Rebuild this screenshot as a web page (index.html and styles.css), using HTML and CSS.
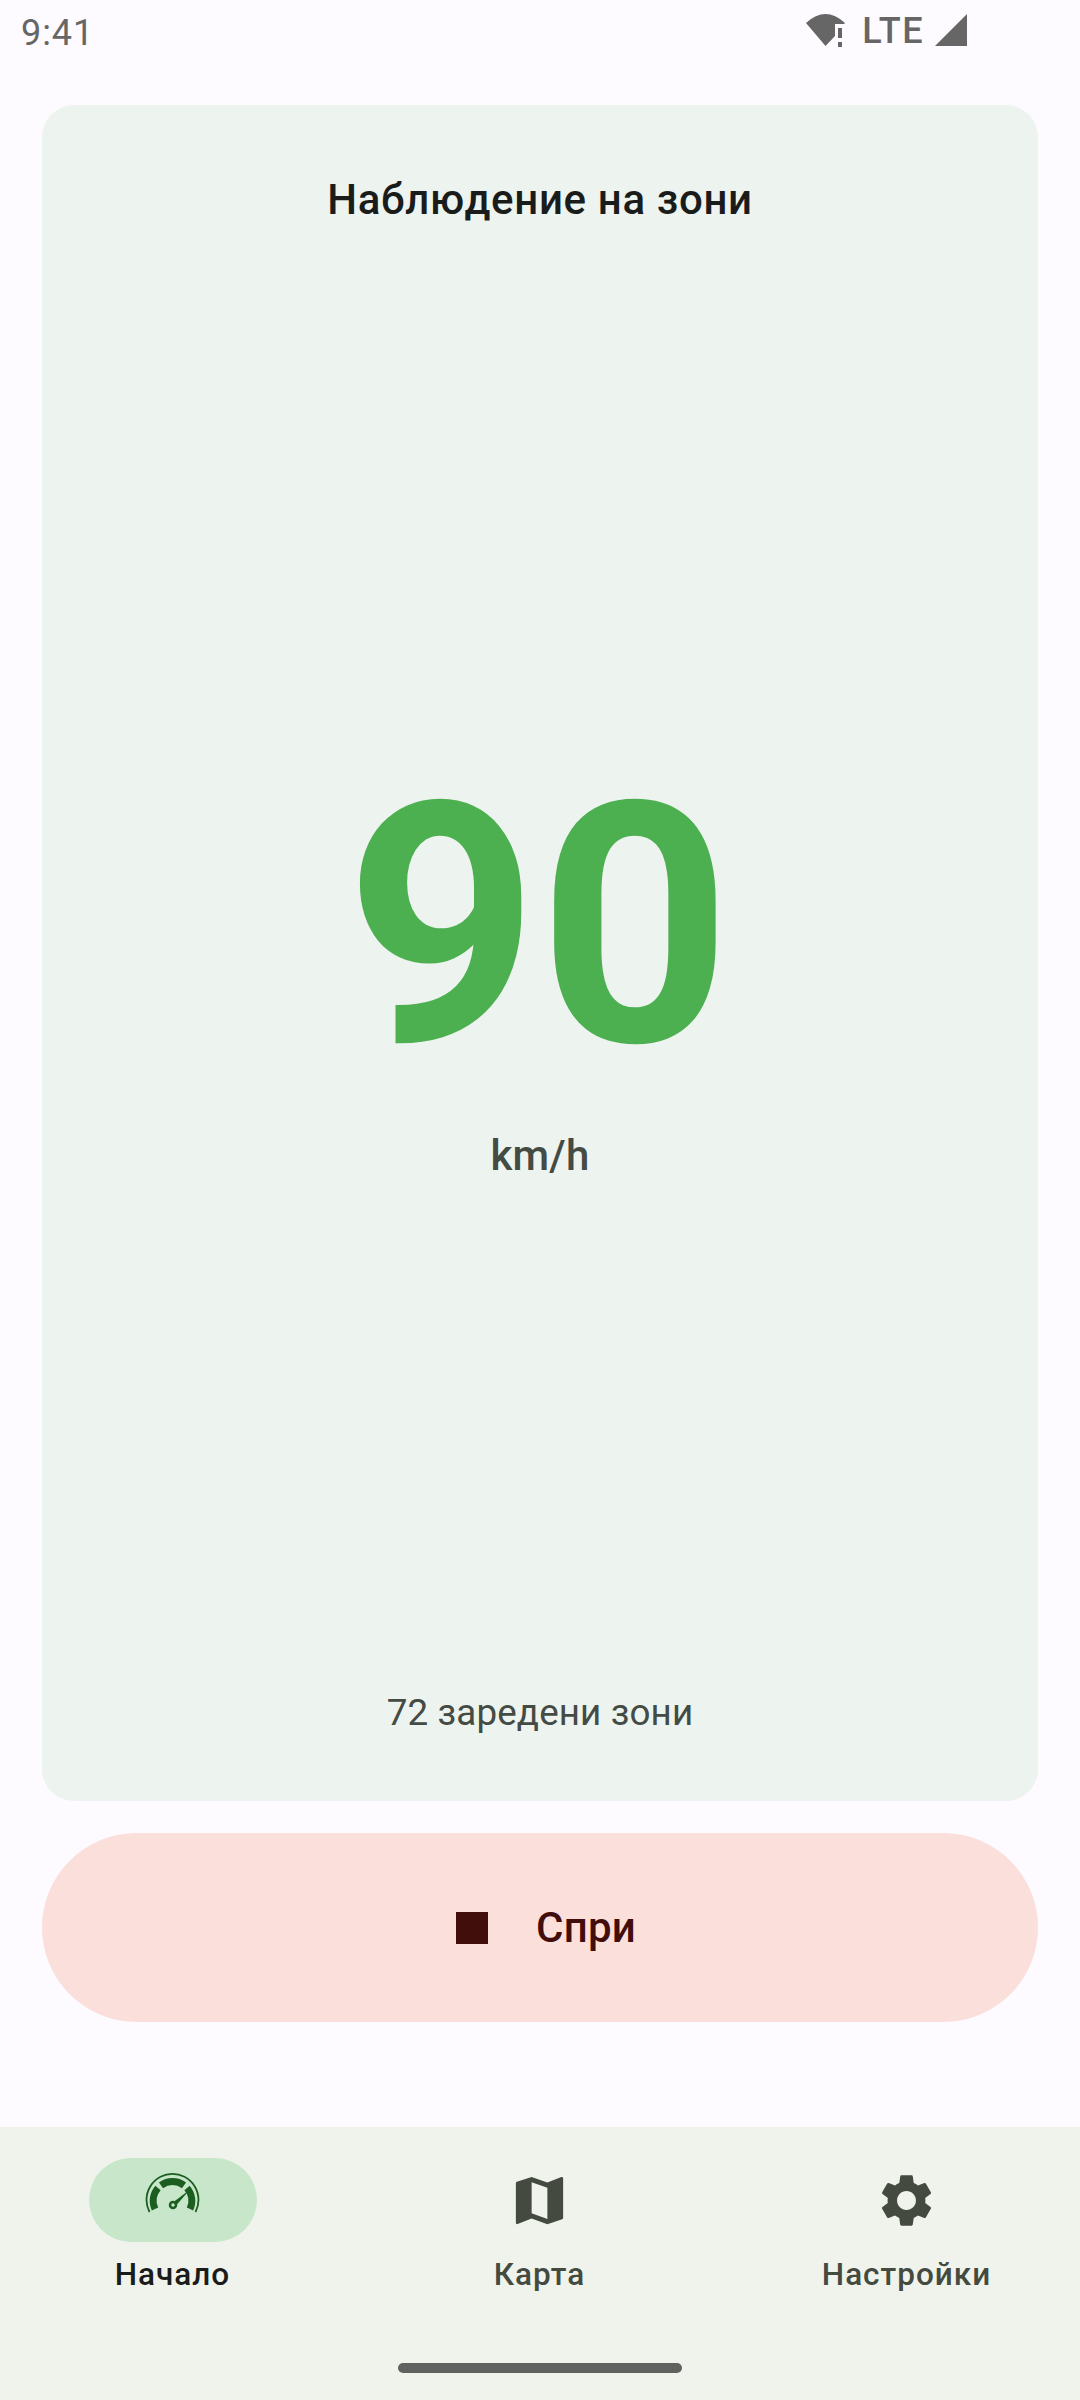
FILE: index.html
```html
<!DOCTYPE html>
<html lang="en">
<head>
    <meta charset="UTF-8">
    <title>Наблюдение на зони</title>
    <link rel="stylesheet" href="styles.css">
</head>
<body>
    <div class="status-bar">
        <span class="clock">9:41</span>
        <div class="status-icons">
            <svg class="wifi" width="40" height="34" viewBox="0 0 40 34">
                <path d="M0 10 Q19.5 -8 39 10 L38 11 L29 11 L29 23 L19.5 33 Z" />
                <rect x="32" y="15" width="4" height="10" />
                <rect x="32" y="29" width="4" height="5" />
            </svg>
            <span class="lte">LTE</span>
            <svg class="signal" width="32" height="32" viewBox="0 0 32 32">
                <path d="M32 0 V32 H0 Z" />
            </svg>
        </div>
    </div>

    <main class="content">
        <section class="card">
            <h2 class="card-title">Наблюдение на зони</h2>
            <div class="speed">
                <div class="speed-value">90</div>
                <div class="speed-unit">km/h</div>
            </div>
            <p class="zones">72 заредени зони</p>
        </section>
        <button class="stop-btn">
            <span class="stop-icon"></span>
            <span>Спри</span>
        </button>
    </main>

    <nav class="nav">
        <a class="nav-item active">
            <span class="nav-icon">
                <svg width="63" height="63" viewBox="0 0 63 63">
                    <!-- outer rim -->
                    <path class="rim" d="M8.5 43 A26 26 0 1 1 54.5 43" />
                    <!-- dial, split in three segments -->
                    <path class="dial" d="M14 40 A19.5 19.5 0 0 1 17 19" />
                    <path class="dial" d="M20 16.3 A19.5 19.5 0 0 1 43 16.3" />
                    <path class="dial" d="M46 19 A19.5 19.5 0 0 1 49 40" />
                    <!-- needle -->
                    <path class="needle-fill" d="M32.5 33 L49 20.5 L35.5 36 Z" />
                    <circle class="hub" cx="32" cy="36" r="3" />
                </svg>
            </span>
            <span class="nav-label">Начало</span>
        </a>
        <a class="nav-item">
            <span class="nav-icon">
                <svg width="63" height="63" viewBox="0 0 24 24">
                    <path d="M20.5 3l-.16.03L15 5.1 9 3 3.36 4.9c-.21.07-.36.25-.36.48V20.5c0 .28.22.5.5.5l.16-.03L9 18.9l6 2.1 5.64-1.9c.21-.07.36-.25.36-.48V3.5c0-.28-.22-.5-.5-.5zM15 19l-6-2.11V5l6 2.11V19z" />
                </svg>
            </span>
            <span class="nav-label">Карта</span>
        </a>
        <a class="nav-item">
            <span class="nav-icon">
                <svg width="63" height="63" viewBox="0 0 24 24">
                    <path d="M19.14 12.94c.04-.3.06-.61.06-.94 0-.32-.02-.64-.07-.94l2.03-1.58c.18-.14.23-.41.12-.61l-1.92-3.32c-.12-.22-.37-.29-.59-.22l-2.39.96c-.5-.38-1.03-.7-1.62-.94l-.36-2.54c-.04-.24-.24-.41-.48-.41h-3.84c-.24 0-.43.17-.47.41l-.36 2.54c-.59.24-1.13.57-1.62.94l-2.39-.96c-.22-.08-.47 0-.59.22L2.74 8.87c-.12.21-.08.47.12.61l2.03 1.58c-.05.3-.09.63-.09.94s.02.64.07.94l-2.03 1.58c-.18.14-.23.41-.12.61l1.92 3.32c.12.22.37.29.59.22l2.39-.96c.5.38 1.03.7 1.62.94l.36 2.54c.05.24.24.41.48.41h3.84c.24 0 .44-.17.47-.41l.36-2.54c.59-.24 1.13-.56 1.62-.94l2.39.96c.22.08.47 0 .59-.22l1.92-3.32c.12-.22.07-.47-.12-.61l-2.01-1.58zM12 15.6c-1.98 0-3.6-1.62-3.6-3.6s1.62-3.6 3.6-3.6 3.6 1.62 3.6 3.6-1.62 3.6-3.6 3.6z" />
                </svg>
            </span>
            <span class="nav-label">Настройки</span>
        </a>
        <div class="home-bar"></div>
    </nav>
</body>
</html>
```

FILE: styles.css
```css
* {
    box-sizing: border-box;
}
body {
    margin: 0;
    height: 2400px;
    display: flex;
    flex-direction: column;
    background-color: #fdfbff;
    font-family: Roboto, sans-serif;
}

/* Status bar */
.status-bar {
    height: 105px;
    padding: 0 113px 0 21px;
    display: flex;
    justify-content: space-between;
    align-items: flex-start;
    color: #666666;
}
.clock {
    margin-top: 12px;
    font-size: 36px;
    line-height: 42px;
    letter-spacing: 0.9px;
}
.status-icons {
    display: flex;
    align-items: flex-start;
    margin-top: 13px;
}
.status-icons svg {
    fill: #666666;
}
.wifi {
    margin-right: 16px;
}
.lte {
    margin-right: 11px;
    font-size: 36px;
    line-height: 36px;
    font-weight: 500;
    letter-spacing: 1.5px;
}
.signal {
    margin-top: 1px;
}

/* Main area */
.content {
    flex: 1;
    padding: 0 42px 105px;
    display: flex;
    flex-direction: column;
    gap: 32px;
}
.card {
    flex: 1;
    background: #edf3ee;
    border-radius: 32px;
    display: flex;
    flex-direction: column;
    align-items: center;
    padding: 70px 0 66px;
}
.card-title {
    margin: 0;
    font-size: 42px;
    line-height: 50px;
    font-weight: 500;
    letter-spacing: 0.65px;
    color: #191c1a;
}
.speed {
    flex: 1;
    padding-bottom: 5px;
    display: flex;
    flex-direction: column;
    align-items: center;
    justify-content: center;
}
.speed-value {
    margin-right: 3px;
    font-size: 336px;
    line-height: 390px;
    font-weight: 700;
    color: #4caf50;
}
.speed-unit {
    margin-top: 10px;
    font-size: 42px;
    line-height: 50px;
    font-weight: 500;
    letter-spacing: 0.2px;
    color: #444a44;
}
.zones {
    margin: 0;
    font-size: 36.75px;
    line-height: 44px;
    letter-spacing: 0.13px;
    color: #444a44;
}
.stop-btn {
    flex: none;
    height: 189px;
    border: none;
    border-radius: 95px;
    padding: 0 0 0 12px;
    background: #fadfdb;
    color: #410e0b;
    font-family: inherit;
    font-size: 42px;
    font-weight: 500;
    letter-spacing: 0.2px;
    display: flex;
    align-items: center;
    justify-content: center;
    gap: 48px;
}
.stop-icon {
    width: 32px;
    height: 32px;
    background: #410e0b;
}

/* Bottom navigation */
.nav {
    position: relative;
    height: 273px;
    background: #f0f3ec;
    display: flex;
    gap: 22px;
    padding: 31px 0 0;
}
.nav-item {
    width: 345px;
    display: flex;
    flex-direction: column;
    align-items: center;
    color: #444a40;
    fill: #444a40;
}
.nav-icon {
    width: 168px;
    height: 84px;
    border-radius: 42px;
    display: flex;
    align-items: center;
    justify-content: center;
}
.nav-label {
    margin-top: 11px;
    font-size: 31.5px;
    line-height: 44px;
    font-weight: 500;
    letter-spacing: 1px;
}
.active {
    color: #191c1a;
}
.active .nav-icon {
    background: #c8e6c9;
}
.rim {
    fill: none;
    stroke: #1b5e20;
    stroke-width: 1.8;
}
.dial {
    fill: none;
    stroke: #1b5e20;
    stroke-width: 7;
}
.needle-fill {
    fill: #1b5e20;
}
.hub {
    fill: none;
    stroke: #1b5e20;
    stroke-width: 2.5;
}
.home-bar {
    position: absolute;
    left: 398px;
    bottom: 27px;
    width: 284px;
    height: 10px;
    border-radius: 5px;
    background: #5f625e;
}
```
